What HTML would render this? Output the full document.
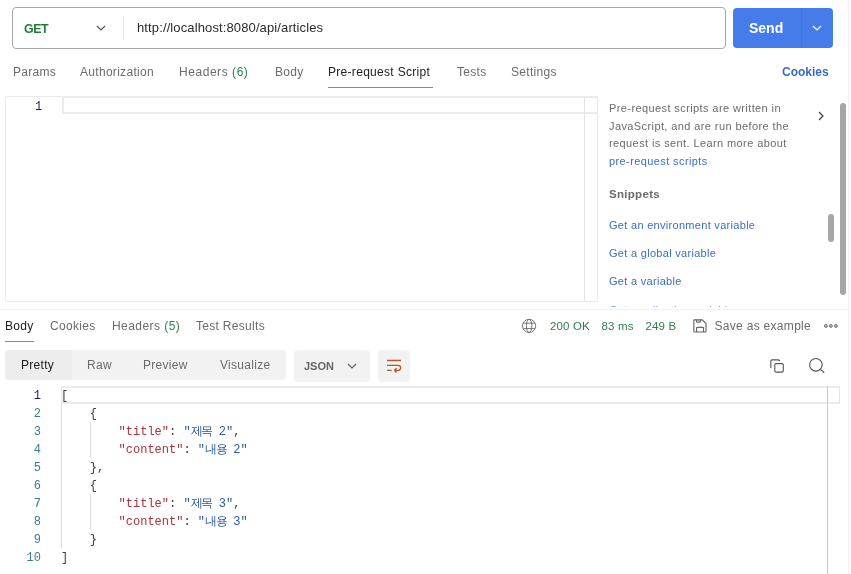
<!DOCTYPE html>
<html><head><meta charset="utf-8">
<style>
*{margin:0;padding:0;box-sizing:border-box}
html,body{width:851px;height:574px;overflow:hidden;background:#fff}
#root{position:absolute;left:0;top:0;width:851px;height:574px;will-change:transform}
body{position:relative;font-family:"Liberation Sans",sans-serif;color:#212121}
.a{position:absolute;white-space:nowrap}
.tab{font-size:12px;letter-spacing:0.3px;color:#6b6b6b;line-height:14px}
.mono{font-family:"Liberation Mono",monospace}
</style></head><body><div id="root">

<!-- URL bar -->
<div class="a" style="left:12px;top:7px;width:714px;height:42px;border:1px solid #a8a8a8;border-radius:4px;background:#fff"></div>
<div class="a" style="left:24px;top:22px;font-size:12.4px;font-weight:bold;color:#1e7d3a;line-height:14px;letter-spacing:-0.45px">GET</div>
<svg class="a" style="left:96px;top:25px" width="10" height="6" viewBox="0 0 10 6"><path d="M1 1 L5 5 L9 1" fill="none" stroke="#555" stroke-width="1.2"/></svg>
<div class="a" style="left:123px;top:16px;width:1px;height:24px;background:#e8e8e8"></div>
<div class="a" style="left:137px;top:21px;font-size:13px;letter-spacing:0.12px;color:#2b2b2b;line-height:14px">http://localhost:8080/api/articles</div>

<!-- Send -->
<div class="a" style="left:733px;top:8px;width:100px;height:40px;border-radius:4px;background:#467bea"></div>
<div class="a" style="left:801px;top:8px;width:1px;height:40px;background:#4272dc"></div>
<div class="a" style="left:749px;top:20px;font-size:14px;font-weight:bold;color:#fff;line-height:16px">Send</div>
<svg class="a" style="left:812px;top:25px" width="10" height="6" viewBox="0 0 10 6"><path d="M1 1 L5 5 L9 1" fill="none" stroke="#fff" stroke-width="1.2"/></svg>

<!-- Request tabs -->
<div class="a tab" style="left:13px;top:65px">Params</div>
<div class="a tab" style="left:80px;top:65px">Authorization</div>
<div class="a tab" style="left:179px;top:65px;letter-spacing:0.55px">Headers <span style="color:#2e7d4f">(6)</span></div>
<div class="a tab" style="left:275px;top:65px">Body</div>
<div class="a tab" style="left:328px;top:65px;color:#212121">Pre-request Script</div>
<div class="a" style="left:328px;top:87px;width:105px;height:1px;background:#c47558"></div>
<div class="a tab" style="left:457px;top:65px">Tests</div>
<div class="a tab" style="left:511px;top:65px">Settings</div>
<div class="a tab" style="left:782px;top:65px;color:#3b6bbf;font-weight:bold;letter-spacing:0">Cookies</div>

<!-- Script editor -->
<div class="a" style="left:5px;top:96px;width:593px;height:206px;border:1px solid #e9e9e9;border-radius:2px"></div>
<div class="a mono" style="left:35px;top:100px;font-size:12px;color:#1c1c5a;line-height:14px">1</div>
<div class="a" style="left:62px;top:96px;width:536px;height:18px;border:2px solid #ececec;border-right:none"></div>
<div class="a" style="left:584px;top:97px;width:1px;height:204px;background:#e3e3e3"></div>

<!-- Right info panel -->
<div class="a" style="left:609px;top:100px;font-size:11px;letter-spacing:0.4px;color:#6b6b6b;line-height:17.6px">Pre-request scripts are written in<br>JavaScript, and are run before the<br>request is sent. Learn more about<br><span style="color:#3a6fc4">pre-request scripts</span></div>
<svg class="a" style="left:817px;top:111px" width="8" height="10" viewBox="0 0 8 10"><path d="M2 1 L6 5 L2 9" fill="none" stroke="#3c3c3c" stroke-width="1.15"/></svg>
<div class="a" style="left:609px;top:187px;font-size:11.5px;letter-spacing:0.3px;font-weight:bold;color:#6b6b6b;line-height:14px">Snippets</div>
<div class="a" style="left:609px;top:218px;font-size:11px;letter-spacing:0.3px;color:#3a6fc4;line-height:14px">Get an environment variable</div>
<div class="a" style="left:609px;top:246px;font-size:11px;letter-spacing:0.3px;color:#3a6fc4;line-height:14px">Get a global variable</div>
<div class="a" style="left:609px;top:274px;font-size:11px;letter-spacing:0.3px;color:#3a6fc4;line-height:14px">Get a variable</div>
<div class="a" style="left:600px;top:298px;width:220px;height:8.5px;overflow:hidden;opacity:0.7"><div style="position:absolute;left:9px;top:4.5px;font-size:11px;letter-spacing:0.3px;color:#3a6fc4;line-height:14px">Get a collection variable</div></div>
<div class="a" style="left:828px;top:214px;width:6px;height:28px;border-radius:3px;background:#a6a6a6"></div>
<div class="a" style="left:840px;top:103px;width:6px;height:192px;border-radius:3px;background:#a6a6a6"></div>
<div class="a" style="left:848px;top:0;width:1px;height:574px;background:#f0f0f0"></div>

<!-- divider -->
<div class="a" style="left:0;top:309px;width:848px;height:1px;background:#f1f1f1"></div>

<!-- Response tabs -->
<div class="a tab" style="left:5px;top:319px;color:#212121">Body</div>
<div class="a" style="left:5px;top:341px;width:29px;height:1px;background:#c47558"></div>
<div class="a tab" style="left:50px;top:319px">Cookies</div>
<div class="a tab" style="left:112px;top:319px;letter-spacing:0.45px">Headers <span style="color:#2e7d4f">(5)</span></div>
<div class="a tab" style="left:196px;top:319px">Test Results</div>

<svg class="a" style="left:521px;top:318px" width="16" height="16" viewBox="0 0 16 16"><g fill="none" stroke="#707070" stroke-width="0.95"><circle cx="8.1" cy="7.9" r="6.6"/><ellipse cx="8.1" cy="7.9" rx="2.7" ry="6.6"/><path d="M2.4 5.2h11.4M2.4 10.6h11.4"/></g></svg>
<div class="a" style="left:550px;top:319px;font-size:11.5px;letter-spacing:0.15px;color:#2e7d4f;line-height:14px">200 OK</div>
<div class="a" style="left:601.5px;top:319px;font-size:11.5px;letter-spacing:0.15px;color:#2e7d4f;line-height:14px">83 ms</div>
<div class="a" style="left:645.5px;top:319px;font-size:11.5px;letter-spacing:0.15px;color:#2e7d4f;line-height:14px">249 B</div>
<svg class="a" style="left:692px;top:318px" width="16" height="16" viewBox="0 0 16 16"><g fill="none" stroke="#666" stroke-width="1.15"><path d="M2.5 1.8H10.3L14 5.5V13.3Q14 14 13.3 14H2.5Q1.8 14 1.8 13.3V2.5Q1.8 1.8 2.5 1.8Z"/><path d="M4.6 1.8V3.5Q4.6 4.2 5.3 4.2H7.6Q8.3 4.2 8.3 3.5V1.8"/><path d="M4.6 14V10Q4.6 9.4 5.2 9.4H10.9Q11.5 9.4 11.5 10V14"/></g></svg>
<div class="a tab" style="left:714.5px;top:319px">Save as example</div>
<svg class="a" style="left:822px;top:322px" width="18" height="8" viewBox="0 0 18 8"><g fill="#b5b5b5" stroke="#7a7a7a" stroke-width="1"><circle cx="3.9" cy="3.9" r="1.5"/><circle cx="8.9" cy="3.9" r="1.5"/><circle cx="13.9" cy="3.9" r="1.5"/></g></svg>

<!-- response toolbar -->
<div class="a" style="left:5px;top:350px;width:281px;height:30px;border-radius:4px;background:#f2f2f2"></div>
<div class="a" style="left:5px;top:350px;width:67px;height:30px;border-radius:4px 0 0 4px;background:#ededed"></div>
<div class="a tab" style="left:21px;top:358px;color:#212121">Pretty</div>
<div class="a tab" style="left:87px;top:358px">Raw</div>
<div class="a tab" style="left:143px;top:358px">Preview</div>
<div class="a tab" style="left:220px;top:358px">Visualize</div>
<div class="a" style="left:294px;top:350px;width:76px;height:32px;border-radius:4px;background:#f2f2f2"></div>
<div class="a" style="left:304px;top:359px;font-size:11px;font-weight:bold;color:#666;line-height:14px">JSON</div>
<svg class="a" style="left:347px;top:363px" width="10" height="6" viewBox="0 0 10 6"><path d="M1 1 L5 5 L9 1" fill="none" stroke="#666" stroke-width="1.2"/></svg>
<div class="a" style="left:378px;top:350px;width:32px;height:32px;border-radius:4px;background:#f2f2f2"></div>
<svg class="a" style="left:385px;top:357px" width="18" height="18" viewBox="0 0 18 18"><g fill="none" stroke="#b8572d" stroke-width="1.35" stroke-linecap="butt" stroke-linejoin="round"><path d="M2 3.5H16M2 8.4H13.2a2.45 2.45 0 0 1 0 4.9H9.6M11.6 11.2L9.5 13.3L11.6 15.4M2 13.3H6.7"/></g></svg>
<svg class="a" style="left:768px;top:357px" width="18" height="18" viewBox="0 0 18 18"><g fill="none" stroke="#555" stroke-width="1.1"><rect x="6.8" y="6.6" width="8.5" height="8.5" rx="1.3"/><path d="M2.8 11V4.3a1.4 1.4 0 0 1 1.4-1.4H10.3a1.3 1.3 0 0 1 1.3 1.2"/></g></svg>
<svg class="a" style="left:807px;top:356px" width="20" height="20" viewBox="0 0 20 20"><g fill="none" stroke="#555" stroke-width="1.15"><circle cx="8.9" cy="8.8" r="6.3"/><path d="M13.5 13.4L17.2 16.7"/></g></svg>

<!-- response editor -->
<div class="a" style="left:61px;top:386px;width:778.5px;height:18px;border:2px solid #ececec;border-right:1.5px solid #e6e6e6"></div>
<div class="a" style="left:61px;top:403px;width:1px;height:145px;background:#dcdcdc"></div>
<div class="a" style="left:827px;top:386px;width:1px;height:188px;background:#c8c8c8"></div>

<div class="a mono" style="left:0;top:387px;width:41px;text-align:right;font-size:12px;line-height:18px;color:#3d7b91">
<div style="color:#1c1c5a">1</div><div>2</div><div>3</div><div>4</div><div>5</div><div>6</div><div>7</div><div>8</div><div>9</div><div>10</div></div>
<div class="a" style="left:90px;top:422px;width:1px;height:36px;background:#dcdcdc"></div>
<div class="a" style="left:90px;top:494px;width:1px;height:36px;background:#dcdcdc"></div>
<pre class="a mono" style="white-space:pre;left:61px;top:387px;font-size:12px;line-height:18px;color:#3b3b3b">[
    {
        <span style="color:#a8323b">"title"</span>: <span style="color:#2a5aa5">"<span style="letter-spacing:-1.5px">제목</span> 2"</span>,
        <span style="color:#a8323b">"content"</span>: <span style="color:#2a5aa5">"<span style="letter-spacing:-1.5px">내용</span> 2"</span>
    },
    {
        <span style="color:#a8323b">"title"</span>: <span style="color:#2a5aa5">"<span style="letter-spacing:-1.5px">제목</span> 3"</span>,
        <span style="color:#a8323b">"content"</span>: <span style="color:#2a5aa5">"<span style="letter-spacing:-1.5px">내용</span> 3"</span>
    }
]</pre>

</div></body></html>
